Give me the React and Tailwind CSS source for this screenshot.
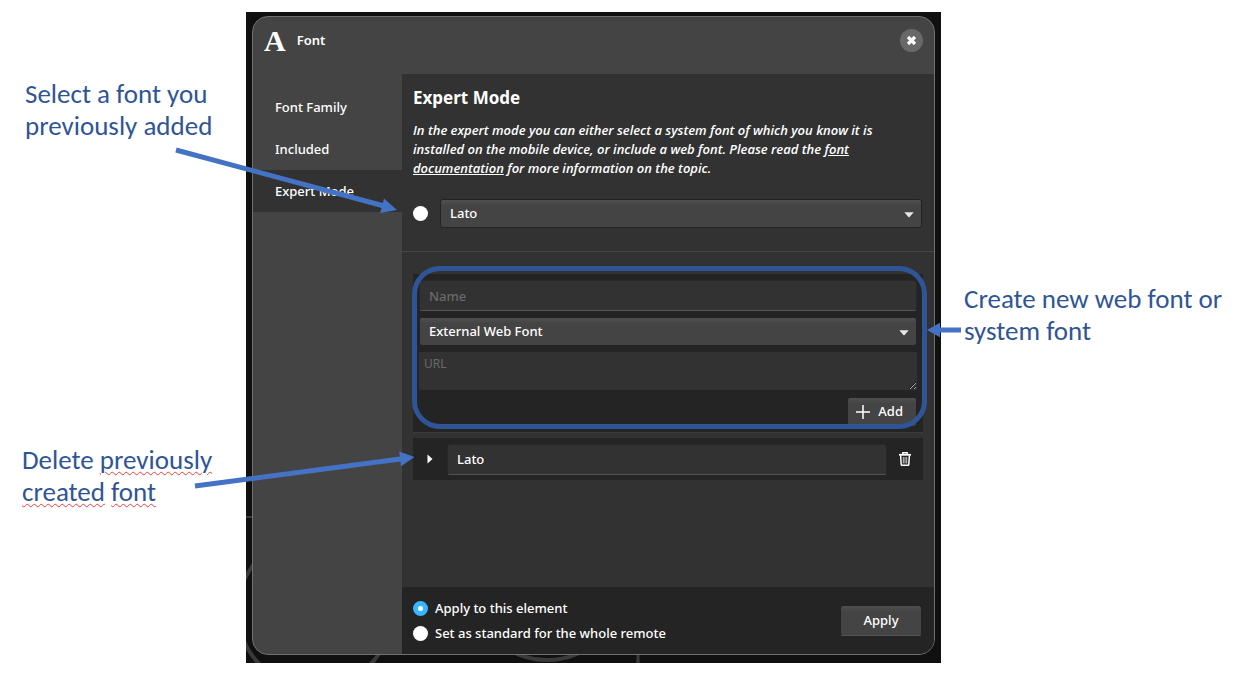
import React, { useState } from "react";

const raised =
  "rounded-[3px] border border-[#232323] bg-linear-to-b from-[#505050] via-[#444444] via-20% to-[#444444]";

function SelectBox({ label, options, className }) {
  return (
    <div className={`relative min-w-0 ${className}`}>
      <select
        aria-label={label}
        className={`block h-[29px] w-full appearance-none pl-[9px] pr-8 text-[13px] font-medium text-white ${raised}`}
      >
        {options.map((o) => (
          <option key={o}>{o}</option>
        ))}
      </select>
      <svg
        className="pointer-events-none absolute right-2 top-[13px] h-[6px] w-[10px]"
        viewBox="0 0 10 6"
        aria-hidden="true"
      >
        <path d="M0.3 0.3h9.4L5.8 4.8a1 1 0 0 1-1.6 0z" fill="#e6e6e6" />
      </svg>
    </div>
  );
}

const radio =
  "size-[15px] shrink-0 appearance-none rounded-full bg-white checked:border-[5px] checked:border-[#38b6ff]";

const field =
  "block h-[31px] rounded-[3px] border border-[#282828] border-b-[#555555] bg-[#323232] text-[13px] font-medium text-white placeholder:text-[#6a6a6a]";

function NavItem({ children, active }) {
  return (
    <button
      type="button"
      className={`flex h-[42px] w-full items-center pl-[22px] pt-px text-left text-[13px] font-medium ${active ? "bg-[#323232]" : ""}`}
    >
      {children}
    </button>
  );
}

function Header() {
  return (
    <header className="flex h-[57px] items-start justify-between px-[11px]">
      <div className="flex h-12 items-center gap-[11px]">
        <span
          aria-hidden="true"
          className="font-['Liberation_Serif',serif] text-[30px] font-bold leading-none"
        >
          A
        </span>
        <h1 className="text-[13px] font-semibold">Font</h1>
      </div>
      <button
        type="button"
        aria-label="Close"
        className="mt-3 flex size-[23px] items-center justify-center rounded-full bg-[#686868]"
      >
        <svg className="size-[11px]" viewBox="0 0 11 11" aria-hidden="true">
          <path d="M2 2l7 7M9 2l-7 7" stroke="#fff" strokeWidth="3.2" />
        </svg>
      </button>
    </header>
  );
}

function NewFontForm() {
  return (
    <div className="relative border-b border-[#3c3c3c] bg-[#242424] px-[6px] pb-[5px] pt-[6px]">
      <input aria-label="Name" placeholder="Name" className={`${field} w-full px-[9px]`} />
      <SelectBox
        label="Font type"
        options={["External Web Font", "System Font"]}
        className="mt-[6px]"
      />
      <textarea
        aria-label="URL"
        placeholder="URL"
        className="mt-[6px] block h-[38px] w-full resize bg-[#323232] px-[5px] py-1 text-[12px] leading-4 text-white [color-scheme:dark] placeholder:text-[#6a6a6a]"
      />
      <div className="mt-[7px] flex justify-end">
        <button
          type="button"
          className={`flex h-[30px] items-center gap-2 pl-[8px] pr-[13px] text-[13px] font-medium ${raised}`}
        >
          <svg className="size-[14px]" viewBox="0 0 14 14" aria-hidden="true">
            <path d="M7 0v14M0 7h14" stroke="#fff" strokeWidth="1.5" />
          </svg>
          Add
        </button>
      </div>
      <div className="pointer-events-none absolute -left-px -right-1 -top-2 bottom-[3px] rounded-[28px] border-[5px] border-[#2f5597]" />
    </div>
  );
}

function FontRow() {
  return (
    <div className="mt-[5px] flex h-[42px] items-center bg-[#242424] pl-[14px] pr-3">
      <button type="button" aria-label="Expand Lato" className="w-[6px]">
        <svg className="block h-[10px] w-[6px]" viewBox="0 0 6 10" aria-hidden="true">
          <path d="M0.5 0.5L5.5 5L0.5 9.5z" fill="#fff" />
        </svg>
      </button>
      <input
        aria-label="Font name"
        defaultValue="Lato"
        className={`${field} ml-[14px] mr-3 min-w-0 flex-1 px-[9px]`}
      />
      <button type="button" aria-label="Delete Lato">
        <svg className="block h-[14px] w-3" viewBox="0 0 12 14" fill="none" aria-hidden="true">
          <path d="M0 2.8h12" stroke="#fff" strokeWidth="1.8" />
          <path d="M3.8 2.4V0.8h4.4v1.6" stroke="#fff" strokeWidth="1.4" />
          <path d="M1.6 3.5l0.6 8.8q0 1 1 1h5.6q1 0 1-1L10.4 3.5" stroke="#fff" strokeWidth="1.5" />
          <path d="M4.3 5v6.5M6 5v6.5M7.7 5v6.5" stroke="#d8d8d8" strokeWidth="0.9" />
        </svg>
      </button>
    </div>
  );
}

function Footer() {
  const [scope, setScope] = useState("element");
  return (
    <footer className="flex h-[67px] items-center justify-between bg-[#242424] pl-[11px] pr-3">
      <div className="flex flex-col gap-[5px] text-[13px] font-medium leading-5">
        <label className="flex items-center gap-[7px]">
          <input
            type="radio"
            name="scope"
            className={radio}
            checked={scope === "element"}
            onChange={() => setScope("element")}
          />
          Apply to this element
        </label>
        <label className="flex items-center gap-[7px]">
          <input
            type="radio"
            name="scope"
            className={radio}
            checked={scope === "remote"}
            onChange={() => setScope("remote")}
          />
          Set as standard for the whole remote
        </label>
      </div>
      <button
        type="button"
        className={`h-[31px] w-[82px] text-[13px] font-medium ${raised} border-b-[#555555]`}
      >
        Apply
      </button>
    </footer>
  );
}

function Dialog() {
  return (
    <section className="relative overflow-hidden rounded-2xl border border-[#707070] bg-[#444444] text-white">
      <Header />
      <div className="flex min-h-[580px]">
        <nav className="w-[149px] shrink-0 pt-3">
          <NavItem>Font Family</NavItem>
          <NavItem>Included</NavItem>
          <NavItem active>Expert Mode</NavItem>
        </nav>
        <div className="flex min-w-0 flex-1 flex-col bg-[#323232]">
          <div className="pl-[11px] pr-3 pt-3">
            <h2 className="text-[17px] font-bold leading-6">Expert Mode</h2>
            <p className="mt-[11px] max-w-[480px] font-['Open_Sans',sans-serif] text-[13px] font-semibold italic leading-[19px]">
              In the expert mode you can either select a system font of which you know it is
              installed on the mobile device, or include a web font. Please read the{" "}
              <a href="#docs" className="underline">
                font documentation
              </a>{" "}
              for more information on the topic.
            </p>
            <div className="mt-[21px] flex items-center">
              <input type="radio" name="existing" aria-label="Use an added font" className={radio} />
              <SelectBox label="Added font" options={["Lato"]} className="ml-3 flex-1" />
            </div>
          </div>
          <hr className="mt-[23px] border-[#444444]" />
          <div className="flex-1 px-[11px] pt-[22px]">
            <NewFontForm />
            <FontRow />
          </div>
          <Footer />
        </div>
      </div>
    </section>
  );
}

function Backdrop() {
  return (
    <svg className="absolute inset-0 size-full" aria-hidden="true" fill="none" stroke="#3a3a3a">
      <circle cx="69" cy="599" r="77" strokeWidth="4" />
      <circle cx="301" cy="574" r="74" strokeWidth="4" />
      <path d="M392 640v12" strokeWidth="3" />
      <path d="M0 505h8" strokeWidth="2" />
    </svg>
  );
}

function Misspelt({ children }) {
  return (
    <span className="underline decoration-[#f23b3b] decoration-wavy decoration-1 underline-offset-2">
      {children}
    </span>
  );
}

export default function App() {
  return (
    <main className="grid grid-cols-[246px_minmax(0,1fr)_298px] bg-white pb-[14px] pt-3 font-['Noto_Sans',sans-serif]">
      <aside className="pl-[22px] pt-[66px] font-['Carlito','Lato',sans-serif] text-[27px] leading-8 text-[#2f5597]">
        <p className="pl-[3px]">
          Select a font you
          <br />
          previously added
        </p>
        <p className="mt-[302px]">
          Delete <Misspelt>previously</Misspelt>
          <br />
          <Misspelt>created</Misspelt> <Misspelt>font</Misspelt>
        </p>
      </aside>
      <div className="relative bg-[#101010] px-[6px] pb-2 pt-1">
        <Backdrop />
        <Dialog />
        <svg
          className="pointer-events-none absolute -left-[246px] top-0 h-[651px] w-[430px]"
          viewBox="0 12 430 651"
          fill="#4472c4"
          aria-hidden="true"
        >
          <path d="M176 150L386 206.5M195 486L404 458.5" stroke="#4472c4" strokeWidth="5" />
          <path d="M397 210L380.2 213L384 198.5z" />
          <path d="M414.5 457L401 466.2L399.2 451.4z" />
        </svg>
        <svg
          className="pointer-events-none absolute -right-5 top-[310px] h-4 w-[34px]"
          viewBox="0 0 34 16"
          fill="#4472c4"
          aria-hidden="true"
        >
          <path d="M0 8L13 0.7V5.5H34V10.5H13V15.3z" />
        </svg>
      </div>
      <aside className="pl-[23px] pt-[271px] font-['Carlito','Lato',sans-serif] text-[27px] leading-8 text-[#2f5597]">
        <p>
          Create new web font or
          <br />
          system font
        </p>
      </aside>
    </main>
  );
}
